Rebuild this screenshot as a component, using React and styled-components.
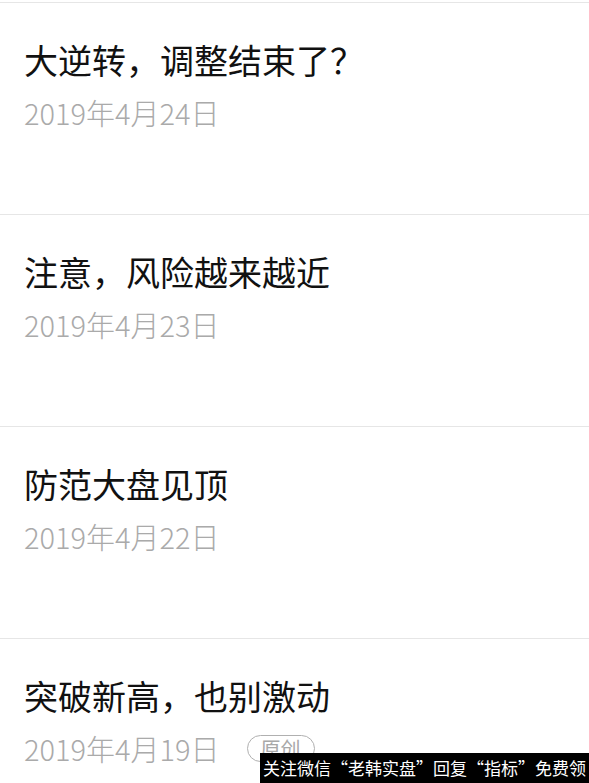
import styled, { createGlobalStyle } from "styled-components"

const GlobalStyle = createGlobalStyle`
    html, body {
        margin: 0;
        padding: 0;
        background: #ffffff;
    }
    body {
        font-family: "Noto Sans CJK SC", "Noto Sans", sans-serif;
        overflow: hidden;
    }
`

const Page = styled.div`
    position: relative;
    width: 589px;
    height: 783px;
    overflow: hidden;
    padding-top: 2px;
    box-sizing: border-box;
`

const List = styled.ul`
    list-style: none;
    margin: 0;
    padding: 0;
`

const Item = styled.li`
    height: 212px;
    box-sizing: border-box;
    border-top: 1px solid #e6e6e6;
    padding: 36px 24px 0;
`

const Title = styled.div`
    font-size: 34px;
    line-height: 42px;
    color: #111111;
    white-space: nowrap;
`

const Meta = styled.div`
    display: flex;
    align-items: center;
    margin-top: 14px;
    height: 34px;
`

const DateText = styled.span`
    font-size: 29px;
    line-height: 34px;
    font-weight: 300;
    color: #aaaaaa;
`

const Badge = styled.span`
    margin-left: 27px;
    height: 25px;
    padding: 0 13px;
    border: 1.5px solid #b0b0b0;
    border-radius: 14px;
    font-size: 20px;
    line-height: 25px;
    color: #a8a8a8;
`

const Watermark = styled.div`
    position: absolute;
    right: 0;
    bottom: 0;
    width: 329px;
    height: 30px;
    background: #000000;
    color: #ffffff;
    font-size: 17px;
    line-height: 30px;
    text-align: center;
    white-space: nowrap;
`

const articles = [
    { title: "大逆转，调整结束了？", date: "2019年4月24日" },
    { title: "注意，风险越来越近", date: "2019年4月23日" },
    { title: "防范大盘见顶", date: "2019年4月22日" },
    { title: "突破新高，也别激动", date: "2019年4月19日", original: true },
]

const App = () => {
    return (
        <Page>
            <GlobalStyle />
            <List>
                {articles.map((a) => (
                    <Item key={a.date}>
                        <Title>{a.title}</Title>
                        <Meta>
                            <DateText>{a.date}</DateText>
                            {a.original && <Badge>原创</Badge>}
                        </Meta>
                    </Item>
                ))}
            </List>
            <Watermark>关注微信“老韩实盘”回复“指标”免费领</Watermark>
        </Page>
    )
}

export default App
